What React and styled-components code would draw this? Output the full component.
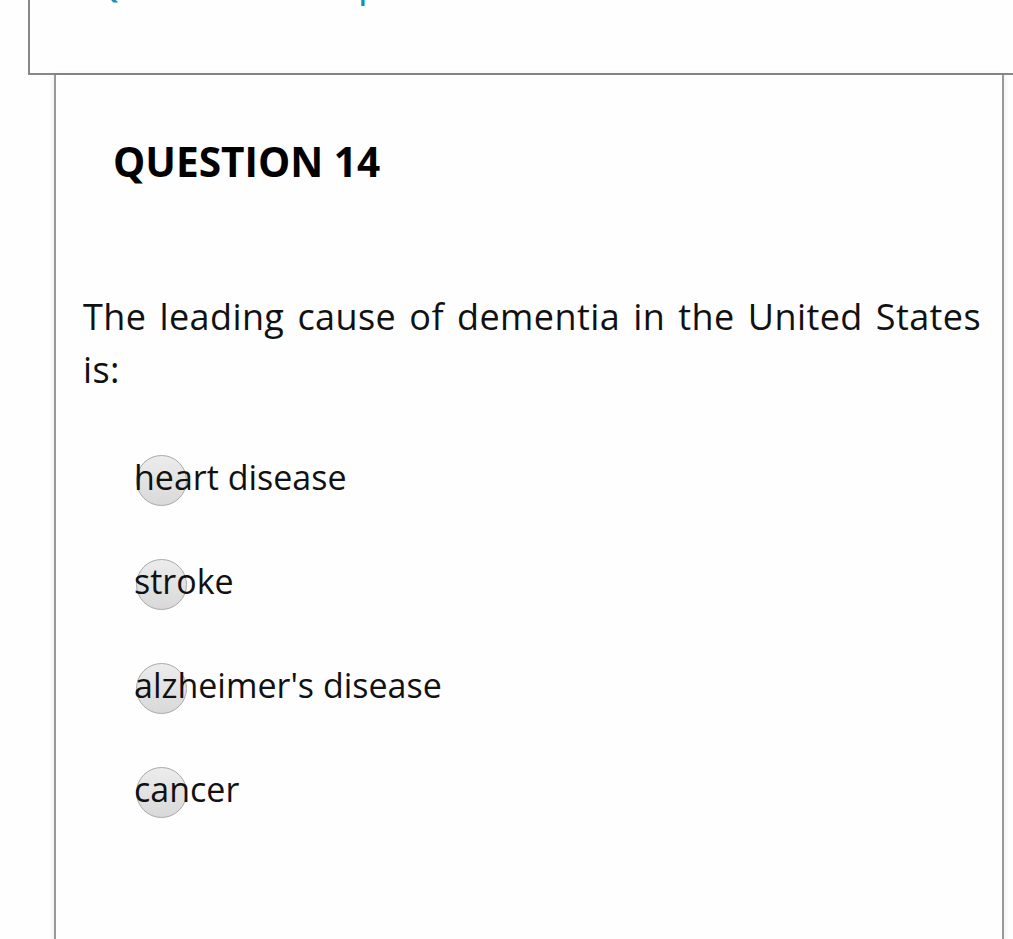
import React from "react";
import styled, { createGlobalStyle } from "styled-components";

const GlobalStyle = createGlobalStyle`
  html, body {
    margin: 0;
    padding: 0;
    background: #fefefe;
    overflow: hidden;
  }
  body {
    font-family: "Open Sans", "Noto Sans", sans-serif;
    color: #111;
  }
`;

/* ------------------ TOP STATUS BOX ------------------ */
const StatusBox = styled.div`
  box-sizing: border-box;
  height: 135px;
  margin: -60px 0 0 28px;
  padding: 15px 0 0 61px;
  border: 2px solid #888;
  border-right: none;
  background: #fefefe;
  overflow: hidden;
`;

const StatusTitle = styled.h1`
  margin: 0;
  font-size: 40px;
  line-height: 48px;
  font-weight: 400;
  color: #1a8fb1;
  white-space: nowrap;
`;

/* ------------------ QUESTION CARD ------------------ */
const Card = styled.section`
  box-sizing: border-box;
  min-height: 900px;
  margin: 0 9px 0 54px;
  padding: 63px 21px 0 27px;
  border-left: 2px solid #999;
  border-right: 2px solid #999;
  background: #fefefe;
  box-shadow: 0 0 6px rgba(0, 0, 0, 0.09);
`;

const Heading = styled.h2`
  margin: 0 0 0 30px;
  font-size: 40.6px;
  line-height: 48px;
  font-weight: 700;
  color: #000;
`;

const Prompt = styled.p`
  margin: 104px 0 0;
  font-size: 36px;
  line-height: 53px;
  letter-spacing: 0.4px;
  text-align: justify;
  color: #111;
`;

const Options = styled.div`
  display: flex;
  flex-direction: column;
  gap: 54px;
  margin-top: 56px;
  padding-left: 51px;
`;

const Option = styled.label`
  position: relative;
  display: block;
  font-size: 34px;
  line-height: 50px;
  color: #111;
`;

const Radio = styled.span`
  position: absolute;
  left: 2px;
  top: 3px;
  box-sizing: border-box;
  width: 51px;
  height: 51px;
  border-radius: 50%;
  border: 1px solid #a8a8a8;
  background: linear-gradient(#ececec, #d9d9d9);
`;

const OptionText = styled.span`
  position: relative;
`;

const answers = ["heart disease", "stroke", "alzheimer's disease", "cancer"];

const App = () => {
  return (
    <>
      <GlobalStyle />
      <StatusBox>
        <StatusTitle>Question Completion Status:</StatusTitle>
      </StatusBox>
      <Card>
        <Heading>QUESTION 14</Heading>
        <Prompt>The leading cause of dementia in the United States is:</Prompt>
        <Options>
          {answers.map((a) => (
            <Option key={a}>
              <Radio />
              <OptionText>{a}</OptionText>
            </Option>
          ))}
        </Options>
      </Card>
    </>
  );
};

export default App;
